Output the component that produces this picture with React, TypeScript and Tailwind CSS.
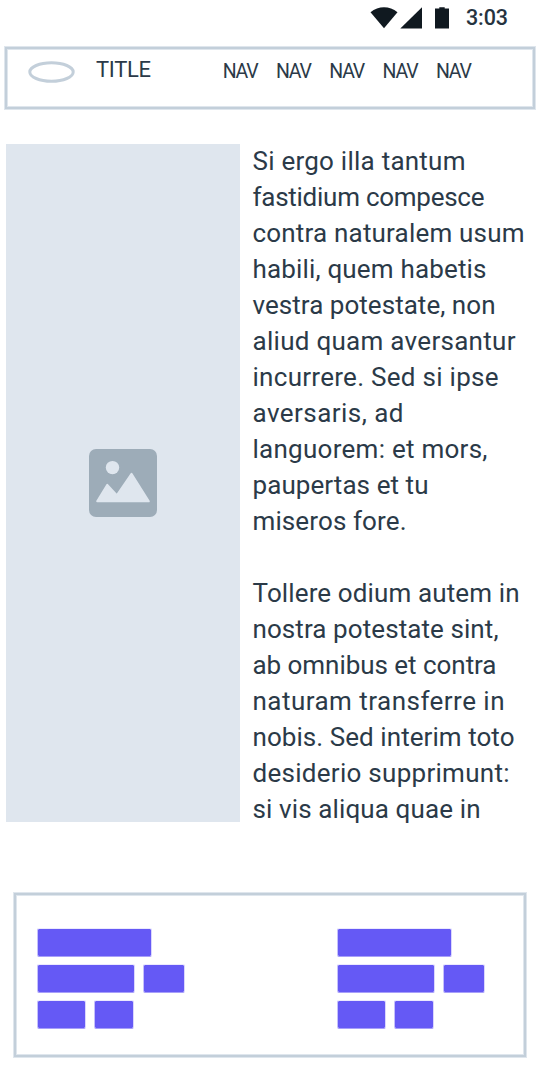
import { useLayoutEffect, useRef, useState } from "react";

type Line = { text: string; width: number };

const paragraphs: Line[][] = [
  [
    { text: "Si ergo illa tantum", width: 213 },
    { text: "fastidium compesce", width: 232 },
    { text: "contra naturalem usum", width: 272 },
    { text: "habili, quem habetis", width: 234 },
    { text: "vestra potestate, non", width: 243 },
    { text: "aliud quam aversantur", width: 263 },
    { text: "incurrere. Sed si ipse", width: 246 },
    { text: "aversaris, ad", width: 151 },
    { text: "languorem: et mors,", width: 235 },
    { text: "paupertas et tu", width: 176 },
    { text: "miseros fore.", width: 154 },
  ],
  [
    { text: "Tollere odium autem in", width: 267 },
    { text: "nostra potestate sint,", width: 246 },
    { text: "ab omnibus et contra", width: 244 },
    { text: "naturam transferre in", width: 252 },
    { text: "nobis. Sed interim toto", width: 262 },
    { text: "desiderio supprimunt:", width: 257 },
    { text: "si vis aliqua quae in", width: 228 },
  ],
];

/** Tracks a line of text so that it fills the given measure. */
function FitText({ text, width, className = "" }: Line & { className?: string }) {
  const ref = useRef<HTMLSpanElement>(null);
  const [tracking, setTracking] = useState(0);
  useLayoutEffect(() => {
    const el = ref.current;
    if (!el) return;
    const natural = el.getBoundingClientRect().width;
    setTracking((width - natural) / (text.length - 1));
  }, [text, width]);
  return (
    <span ref={ref} className={`inline-block whitespace-nowrap ${className}`} style={{ letterSpacing: tracking }}>
      {text}
    </span>
  );
}

function Block({ className }: { className: string }) {
  return (
    <div
      className={`h-[29px] rounded-[2px] border border-t-[#ebe9fe] border-r-[#dad6fd] border-b-[#a79ffa] border-l-[#c5c0fc] bg-[#6559f5] bg-clip-padding ${className}`}
    />
  );
}

function BlockGroup() {
  return (
    <div className="flex w-[148px] flex-col gap-[7px]">
      <Block className="w-[115px]" />
      <div className="flex gap-2">
        <Block className="w-[98px]" />
        <Block className="w-[42px]" />
      </div>
      <div className="flex gap-2">
        <Block className="w-[49px]" />
        <Block className="w-[40px]" />
      </div>
    </div>
  );
}

function StatusBar() {
  return (
    <div className="flex h-[46px] items-start pt-[6px] pl-[370px]">
      <svg width="82" height="24" viewBox="0 0 82 24" fill="#101920">
        <path d="M.5 6.2C8.5-.4 19.5-.4 27.5 6.2L14 22.2Z" />
        <path d="M30.3 22.5 52 1.2V22.5Z" />
        <path d="M65 2.5H69.3V1.3H74.7V2.5H79V22.5H65Z" />
      </svg>
      <FitText text="3:03" width={42} className="ml-[14px] text-[21.5px] leading-[24px] font-medium text-[#26333f]" />
    </div>
  );
}

export default function App() {
  return (
    <div className="h-[1080px] w-[540px] overflow-hidden bg-white font-['Roboto',sans-serif] text-[#2b3a48]">
      <StatusBar />

      <header className="mr-1 ml-1 h-[64px] border border-[#dfe6ed]">
        <div className="flex h-full items-start border-2 border-[#c3cfda] pt-[8px] pl-[20px] shadow-[inset_0_0_0_1px_#dfe6ed]">
          <svg className="mt-[3px]" width="49" height="24" viewBox="0 0 49 24">
            <ellipse cx="24.5" cy="12" rx="21.7" ry="9.2" fill="none" stroke="#c3cfda" strokeWidth="3" />
          </svg>
          <FitText text="TITLE" width={55} className="ml-[20px] text-[22px] leading-[26px]" />
          <nav className="ml-[72px] flex pt-[2px] text-[19.5px] leading-[26px]">
            {[0, 1, 2, 3, 4].map((i) => (
              <a key={i} className="block w-[53.3px]">
                <FitText text="NAV" width={36} />
              </a>
            ))}
          </nav>
        </div>
      </header>

      <main className="mt-[34px] ml-[6px] flex h-[678px]">
        <div className="flex h-[678px] w-[234px] items-center justify-center bg-[#dfe6ee]">
          <svg width="70" height="70" viewBox="0 0 70 70">
            <rect x="1" y="1" width="68" height="68" rx="7" fill="#9dacb8" />
            <circle cx="24.5" cy="19.6" r="6.7" fill="#dfe6ee" />
            <path
              d="M9.2 53.3 19.3 36.8 28.8 47.2 43.5 25.8 60.8 53.3Z"
              fill="#dfe6ee"
              stroke="#dfe6ee"
              strokeWidth="2"
              strokeLinejoin="round"
            />
          </svg>
        </div>
        <article className="-mt-px ml-[12.5px] flex flex-col gap-9 text-[26px] leading-[36px]">
          {paragraphs.map((lines, i) => (
            <p key={i}>
              {lines.map((line) => (
                <span key={line.text} className="block h-9">
                  <FitText {...line} />
                </span>
              ))}
            </p>
          ))}
        </article>
      </main>

      <footer className="mt-[70px] ml-[13px] h-[166px] w-[514px] border border-[#dfe6ed]">
        <div className="flex h-full gap-[152px] border-2 border-[#c3cfda] pt-[33px] pl-[21px] shadow-[inset_0_0_0_1px_#dfe6ed]">
          <BlockGroup />
          <BlockGroup />
        </div>
      </footer>
    </div>
  );
}
